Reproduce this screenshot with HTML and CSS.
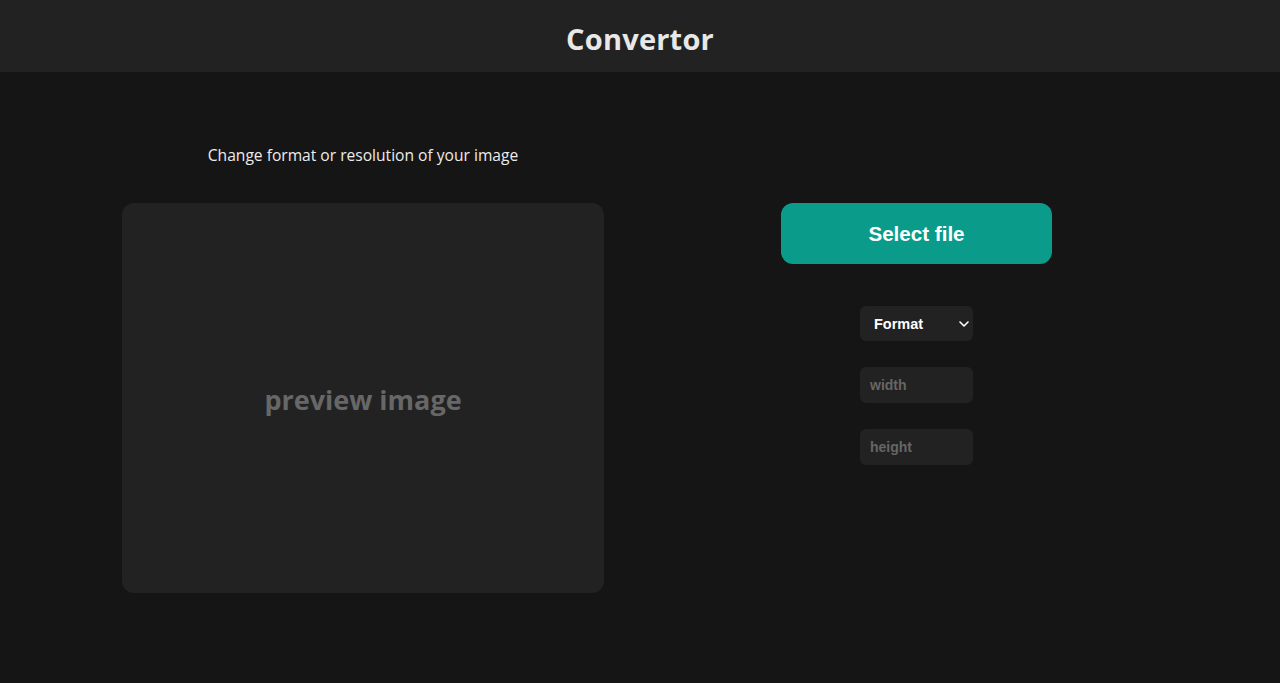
FILE: index.html
```html
<!DOCTYPE html>
<html lang="en">
<head>
<meta charset="utf-8">
<title>Convertor</title>
<link rel="stylesheet" href="styles.css">
</head>
<body>
<header class="topbar">
  <h1 class="title">Convertor</h1>
</header>
<main class="main">
  <section class="left">
    <p class="subtitle">Change format or resolution of your image</p>
    <div class="preview"><span class="preview-text">preview image</span></div>
  </section>
  <section class="right">
    <button class="select-btn" type="button">Select file</button>
    <div class="controls">
      <div class="select-wrap">
        <select class="format">
          <option>Format</option>
          <option>png</option>
          <option>jpg</option>
          <option>webp</option>
        </select>
        <svg class="chevron" width="10" height="6" viewBox="0 0 10 6"><path d="M1 1l4 4 4-4" fill="none" stroke="#fff" stroke-width="1.6" stroke-linecap="round" stroke-linejoin="round"/></svg>
      </div>
      <input class="field" type="text" placeholder="width">
      <input class="field" type="text" placeholder="height">
    </div>
  </section>
</main>
</body>
</html>
```
FILE: styles.css
```css
* { box-sizing: border-box; }
html, body { margin: 0; padding: 0; }
body {
  background: #151515;
  color: #e6e6e6;
  font-family: "Open Sans", "Noto Sans", sans-serif;
  min-height: 683px;
}
.topbar {
  height: 72px;
  background: #222222;
  display: flex;
  align-items: center;
  justify-content: center;
}
.title {
  margin: 4px 0 0;
  font-size: 29px;
  font-weight: 700;
  color: #e8e8e8;
  line-height: 1;
  letter-spacing: 0.2px;
}
.main {
  display: flex;
  align-items: flex-start;
  padding-left: 122px;
  gap: 177px;
}
.left {
  width: 482px;
  padding-top: 71px;
  display: flex;
  flex-direction: column;
  align-items: center;
}
.subtitle {
  margin: 0;
  font-size: 15.6px;
  line-height: 24px;
  color: #ececec;
}
.preview {
  margin-top: 36px;
  width: 482px;
  height: 390px;
  background: #222222;
  border-radius: 12px;
  display: flex;
  align-items: center;
  justify-content: center;
}
.preview-text {
  font-size: 27px;
  font-weight: 700;
  color: #676767;
  margin-top: 2px;
}
.right {
  width: 271px;
  padding-top: 131px;
  display: flex;
  flex-direction: column;
  align-items: center;
}
.select-btn {
  width: 271px;
  height: 61px;
  border: none;
  border-radius: 12px;
  background: #0b9b8a;
  color: #ffffff;
  font-family: "Liberation Sans", Arial, sans-serif;
  font-weight: 700;
  font-size: 20.6px;
  cursor: pointer;
}
.controls {
  margin-top: 42px;
  display: flex;
  flex-direction: column;
  align-items: center;
  gap: 26px;
}
.select-wrap {
  position: relative;
  width: 113px;
  height: 35px;
}
.format {
  appearance: none;
  -webkit-appearance: none;
  width: 113px;
  height: 35px;
  border: none;
  border-radius: 6px;
  background: #222222;
  color: #ffffff;
  font-family: "Liberation Sans", Arial, sans-serif;
  font-weight: 700;
  font-size: 14.5px;
  padding: 0 0 0 14px;
  outline: none;
}
.chevron {
  position: absolute;
  right: 4px;
  top: 15px;
  pointer-events: none;
}
.field {
  width: 113px;
  height: 36px;
  border: none;
  border-radius: 6px;
  background: #222222;
  color: #ffffff;
  font-family: "Liberation Sans", Arial, sans-serif;
  font-weight: 700;
  font-size: 14px;
  padding: 0 0 0 10px;
  outline: none;
}
.field::placeholder {
  color: #666666;
  opacity: 1;
}
```
